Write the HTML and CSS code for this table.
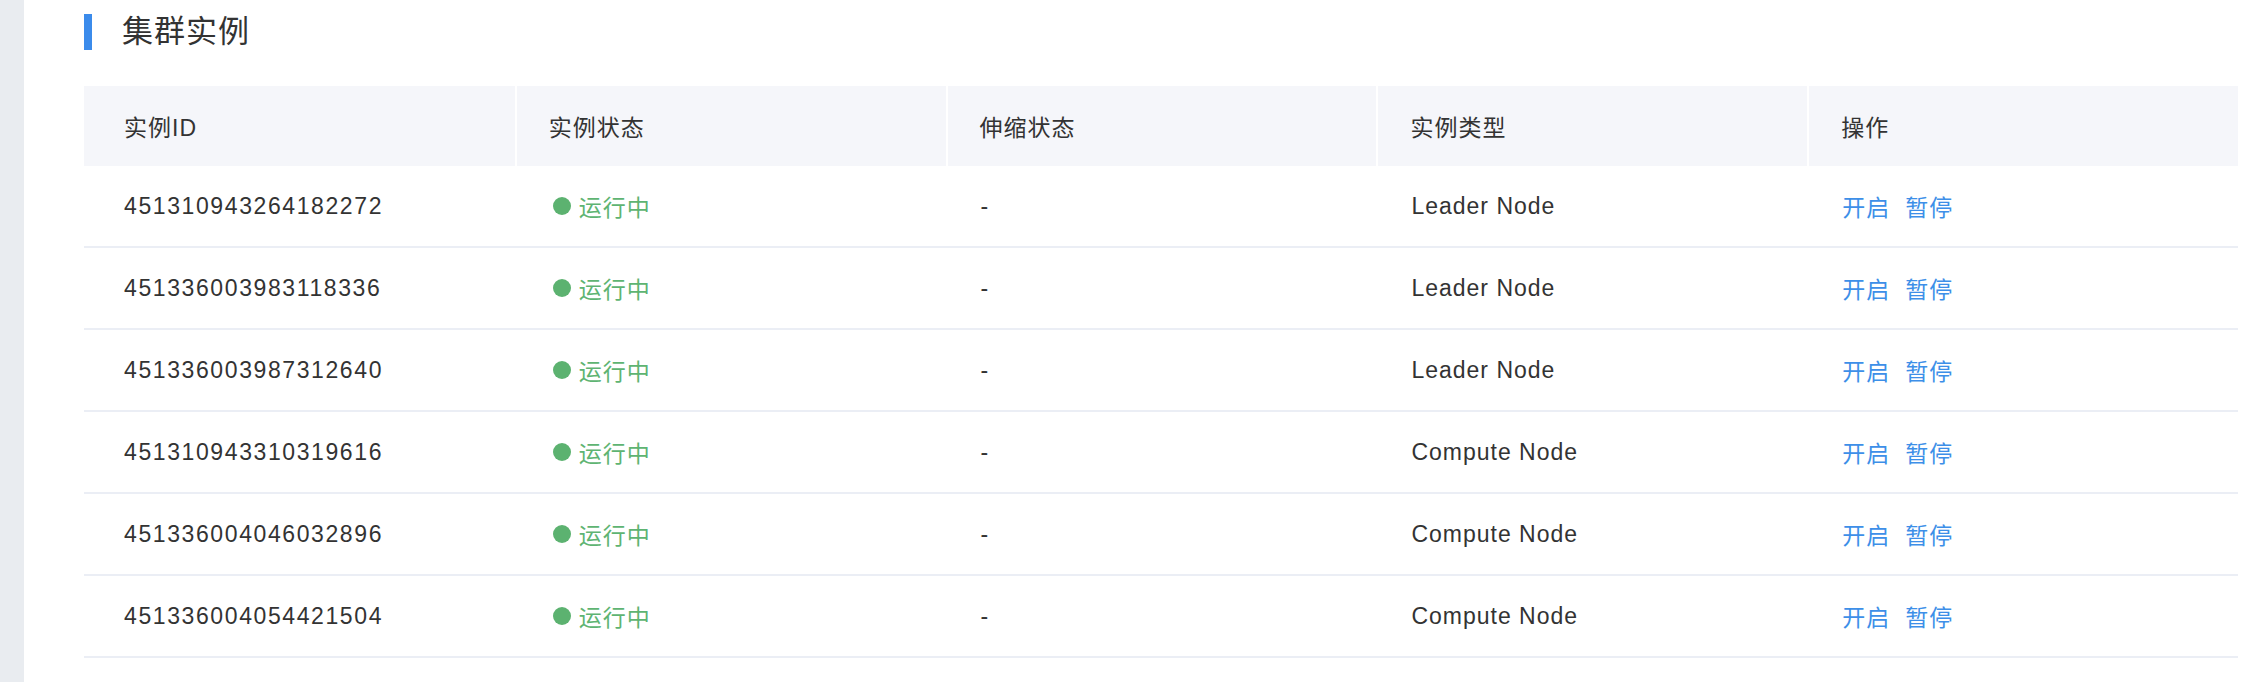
FILE: index.html
```html
<!DOCTYPE html>
<html lang="zh-CN">
<head>
<meta charset="utf-8">
<title>集群实例</title>
<link rel="stylesheet" href="styles.css">
</head>
<body>
<div class="page">
  <aside class="sidebar"></aside>
  <main class="main">
    <div class="section-title">
      <span class="title-bar"></span>
      <h2 class="title-text">集群实例</h2>
    </div>
    <div class="table">
      <div class="row head">
        <div class="cell">实例ID</div>
        <div class="cell">实例状态</div>
        <div class="cell">伸缩状态</div>
        <div class="cell">实例类型</div>
        <div class="cell">操作</div>
      </div>
      <div class="row">
        <div class="cell id">451310943264182272</div>
        <div class="cell state"><span class="status"><span class="dot"></span>运行中</span></div>
        <div class="cell">-</div>
        <div class="cell">Leader Node</div>
        <div class="cell"><a class="action">开启</a><a class="action">暂停</a></div>
      </div>
      <div class="row">
        <div class="cell id">451336003983118336</div>
        <div class="cell state"><span class="status"><span class="dot"></span>运行中</span></div>
        <div class="cell">-</div>
        <div class="cell">Leader Node</div>
        <div class="cell"><a class="action">开启</a><a class="action">暂停</a></div>
      </div>
      <div class="row">
        <div class="cell id">451336003987312640</div>
        <div class="cell state"><span class="status"><span class="dot"></span>运行中</span></div>
        <div class="cell">-</div>
        <div class="cell">Leader Node</div>
        <div class="cell"><a class="action">开启</a><a class="action">暂停</a></div>
      </div>
      <div class="row">
        <div class="cell id">451310943310319616</div>
        <div class="cell state"><span class="status"><span class="dot"></span>运行中</span></div>
        <div class="cell">-</div>
        <div class="cell">Compute Node</div>
        <div class="cell"><a class="action">开启</a><a class="action">暂停</a></div>
      </div>
      <div class="row">
        <div class="cell id">451336004046032896</div>
        <div class="cell state"><span class="status"><span class="dot"></span>运行中</span></div>
        <div class="cell">-</div>
        <div class="cell">Compute Node</div>
        <div class="cell"><a class="action">开启</a><a class="action">暂停</a></div>
      </div>
      <div class="row">
        <div class="cell id">451336004054421504</div>
        <div class="cell state"><span class="status"><span class="dot"></span>运行中</span></div>
        <div class="cell">-</div>
        <div class="cell">Compute Node</div>
        <div class="cell"><a class="action">开启</a><a class="action">暂停</a></div>
      </div>
    </div>
  </main>
</div>
</body>
</html>
```

FILE: styles.css
```css
html, body {
  margin: 0;
  padding: 0;
  background: #ffffff;
}

body {
  font-family: "Liberation Sans", "Noto Sans CJK SC", sans-serif;
  color: #333333;
}

.page {
  display: flex;
  min-height: 682px;
}

.sidebar {
  width: 24px;
  flex: 0 0 24px;
  background: #e9ecf0;
}

.main {
  flex: 1;
  padding: 14px 24px 0 60px;
}

.section-title {
  display: flex;
  align-items: center;
  height: 36px;
  margin-bottom: 36px;
}

.title-bar {
  width: 8px;
  height: 36px;
  background: #3b8beb;
  margin-right: 30px;
}

.title-text {
  margin: 0;
  font-size: 31px;
  font-weight: normal;
  letter-spacing: 1px;
  line-height: 36px;
  color: #333333;
}

.table {
  width: 2154px;
}

.row {
  display: grid;
  grid-template-columns: repeat(5, 1fr);
  height: 82px;
  box-sizing: border-box;
  border-bottom: 2px solid #ebeef5;
  font-size: 23px;
  letter-spacing: 1px;
}

.row.head {
  height: 80px;
  border-bottom: none;
  background: #f5f6fa;
}

.cell {
  display: flex;
  align-items: center;
  padding-left: 35px;
  white-space: nowrap;
}

.cell:first-child {
  padding-left: 40px;
}

.cell.id {
  letter-spacing: 1.6px;
}

.cell.state {
  padding-left: 38px;
}

.head .cell {
  padding-left: 32px;
  border-left: 2px solid #ffffff;
}

.head .cell:first-child {
  padding-left: 40px;
  border-left: none;
}

.status {
  display: inline-flex;
  align-items: center;
  color: #5eb472;
}

.dot {
  width: 18px;
  height: 18px;
  border-radius: 50%;
  background: #5cb270;
  margin-right: 8px;
}

.action {
  color: #3d8fe8;
  margin-right: 15px;
  cursor: pointer;
}
```
